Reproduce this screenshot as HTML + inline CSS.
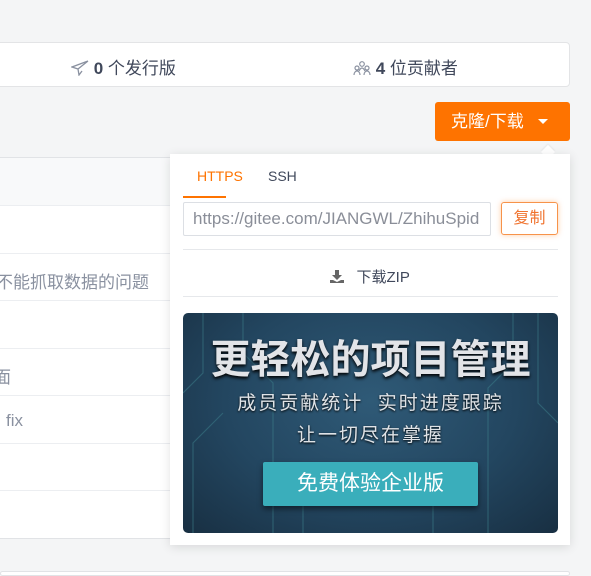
<!DOCTYPE html>
<html><head><meta charset="utf-8"><style>
*{margin:0;padding:0;box-sizing:border-box}
body{width:591px;height:576px;overflow:hidden;background:#f4f5f6;font-family:"Liberation Sans","Noto Sans CJK SC",sans-serif;position:relative;color:#40485b}
.abs{position:absolute}
.stats{left:-10px;top:42px;width:580px;height:45px;background:#fff;border:1px solid #e3e4e6;border-radius:4px}
.stat{top:11px;font-size:17px;color:#40485b}
.list{left:0;top:157px;width:570px;height:382px;background:#fff;border-top:1px solid #e1e3e6;border-bottom:1px solid #e1e3e6}
.row{position:absolute;left:0;width:570px;border-top:1px solid #eceef1}
.rt{font-size:17px;color:#8a91a0}
.btn{left:435px;top:102px;width:135px;height:39px;background:#fe7300;border-radius:3px;color:#fff;font-size:17px;line-height:39px;padding-left:16px}
.dd{left:170px;top:154px;width:400px;height:391px;background:#fff;box-shadow:0 2px 10px rgba(0,0,0,.12)}
</style></head><body>
<div class="abs stats">
 <div class="abs stat" style="left:80px"><svg width="18" height="16" viewBox="0 0 18 16" style="vertical-align:-2px"><path d="M17 1L1 7l6 2 1 6 3-4 M7 9L17 1" fill="none" stroke="#8a91a0" stroke-width="1.3"/></svg> <b>0</b> 个发行版</div>
 <div class="abs stat" style="left:362px"><svg width="18" height="16" viewBox="0 0 18 16" style="vertical-align:-2px"><g fill="none" stroke="#8a91a0" stroke-width="1.2"><circle cx="9" cy="4" r="2.3"/><circle cx="4" cy="8" r="2"/><circle cx="14" cy="8" r="2"/><path d="M1 15c0-3 2-4 3-4s3 1 3 4M11 15c0-3 2-4 3-4s3 1 3 4M6 11c1-2 2-3 3-3s2 1 3 3"/></g></svg> <b>4</b> 位贡献者</div>
</div>
<div class="abs list">
 <div class="abs" style="left:0;top:0;width:570px;height:47px;background:#f8f9fa"></div>
 <div class="row" style="top:47px"></div>
 <div class="row" style="top:95px"></div>
 <div class="row" style="top:142px"></div>
 <div class="row" style="top:190px"></div>
 <div class="row" style="top:237px"></div>
 <div class="row" style="top:285px"></div>
 <div class="row" style="top:332px"></div>
 <div class="abs rt" style="left:-4px;top:110px">不能抓取数据的问题</div>
 <div class="abs rt" style="left:-6px;top:205px">面</div>
 <div class="abs rt" style="left:6px;top:253px">fix</div>
</div>
<div class="abs" style="left:0;top:571px;width:570px;height:5px;background:#fff;border:1px solid #e1e3e6;border-radius:4px"></div>
<div class="abs btn">克隆/下载 <span style="display:inline-block;width:0;height:0;border-left:5px solid transparent;border-right:5px solid transparent;border-top:5px solid #fff;margin-left:10px;vertical-align:3px"></span></div>
<div class="abs" style="left:543px;top:147px;width:10px;height:10px;background:#fff;transform:rotate(45deg);box-shadow:-1px -1px 2px rgba(0,0,0,.06)"></div>
<div class="abs dd">
 <div class="abs" style="left:27px;top:14px;font-size:14px;color:#fe7300">HTTPS</div>
 <div class="abs" style="left:98px;top:14px;font-size:14px;color:#40485b">SSH</div>
 <div class="abs" style="left:13px;top:42px;width:43px;height:2px;background:#fe7300"></div>
 <div class="abs" style="left:13px;top:48px;width:308px;height:34px;border:1px solid #dcdfe4;border-radius:2px;font-size:17px;color:#8a8e98;line-height:32px;padding-left:9px;overflow:hidden;white-space:nowrap">https://gitee.com/JIANGWL/ZhihuSpid</div>
 <div class="abs" style="left:331px;top:48px;width:57px;height:33px;border:1px solid #f7934a;border-radius:3px;font-size:16px;color:#f07430;line-height:31px;text-align:center;box-shadow:0 0 6px rgba(254,115,0,.35)">复制</div>
 <div class="abs" style="left:13px;top:95px;width:375px;height:1px;background:#e6e8eb"></div>
 <div class="abs" style="left:160px;top:112px;font-size:15px;color:#40485b"><svg width="14" height="13" viewBox="0 0 14 13" style="vertical-align:-1px"><path d="M5 0h4v5h3L7 10 2 5h3z M0 10h3l4 2 4-2h3v3H0z" fill="#666"/></svg>&nbsp;&nbsp; 下载ZIP</div>
 <div class="abs" style="left:13px;top:142px;width:375px;height:1px;background:#e6e8eb"></div>
 <div class="abs" style="left:13px;top:159px;width:375px;height:220px;border-radius:5px;overflow:hidden;background:radial-gradient(ellipse at 50% 40%,#2f5a77 0%,#234660 55%,#182f42 100%)">
  <svg class="abs" style="left:0;top:0" width="375" height="220"><g stroke="#3e7f8c" stroke-width="1.2" fill="none" opacity=".5"><path d="M20 0v60l-20 20M60 0v40l30 30v150M330 0v50l-25 25v145M355 0v90l20 20M10 220v-90l30-30M120 220v-40M250 220v-50l20-20"/></g></svg>
  <div class="abs" style="left:0;top:14px;width:375px;text-align:center;font-size:40px;font-weight:bold;color:#e2e4e8;letter-spacing:0px;text-shadow:0 2px 3px #000">更轻松的项目管理</div>
  <div class="abs" style="left:0;top:75px;width:375px;text-align:center;font-size:19px;color:#dfe3e7;letter-spacing:2px;text-shadow:0 1px 2px #000">成员贡献统计&nbsp;&nbsp;实时进度跟踪</div>
  <div class="abs" style="left:0;top:107px;width:375px;text-align:center;font-size:19px;color:#dfe3e7;letter-spacing:2px;text-shadow:0 1px 2px #000">让一切尽在掌握</div>
  <div class="abs" style="left:80px;top:149px;width:215px;height:44px;background:#3aaebb;border-radius:2px;text-align:center;line-height:44px;font-size:21px;color:#fff;box-shadow:0 3px 6px rgba(0,0,0,.5)">免费体验企业版</div>
 </div>
</div>
</body></html>
